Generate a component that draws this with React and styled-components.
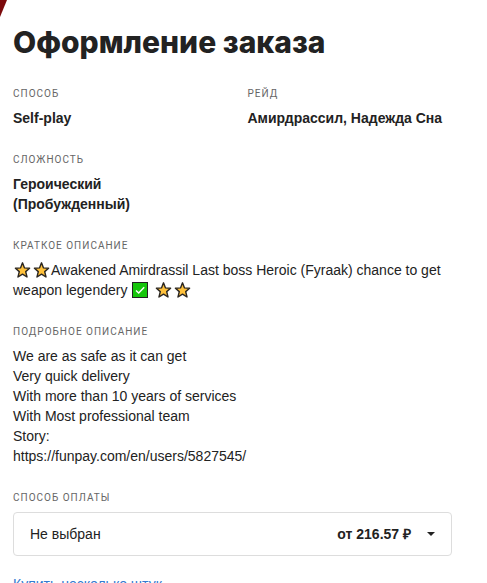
import styled, { createGlobalStyle } from "styled-components";

const GlobalStyle = createGlobalStyle`
  * {
    box-sizing: border-box;
  }
  body {
    margin: 0;
    background-color: white;
    color: #222;
    font-family: "Liberation Sans", Arial, sans-serif;
    font-size: 14px;
    line-height: 20px;
  }
`;
const Page = styled.div`
  position: relative;
  padding: 23px 35px 24px 13px;
`;
const Corner = styled.svg`
  position: absolute;
  top: 0;
  left: 0;
`;
const Title = styled.h1`
  margin: 0 0 26px;
  font-family: Inter, sans-serif;
  font-size: 30px;
  font-weight: 800;
  line-height: 38px;
`;
const Params = styled.div`
  display: grid;
  grid-template-columns: 1fr 1fr;
  column-gap: 30px;
`;
const Param = styled.div`
  margin-bottom: 25px;
  grid-column: ${(props) => (props.$wide ? "1 / -1" : "auto")};
`;
const Label = styled.h5`
  display: block;
  margin: 0 0 7px;
  color: #666;
  font-family: Roboto, sans-serif;
  font-size: 10px;
  font-weight: 400;
  line-height: 14px;
  letter-spacing: 1px;
  text-transform: uppercase;
`;
const Value = styled.div`
  font-weight: ${(props) => (props.$bold ? 700 : 400)};
  white-space: pre-line;
`;
const Emoji = styled.svg`
  width: 18px;
  height: 18px;
  margin-right: 1px;
  vertical-align: -4px;
`;
const Picker = styled.div`
  display: grid;
  grid-template-columns: 1fr auto auto;
  align-items: center;
  margin-bottom: 18px;
`;
const Select = styled.select`
  grid-area: 1 / 1 / 2 / 4;
  width: 100%;
  height: 44px;
  padding: 0 16px;
  appearance: none;
  border: 1px solid #ddd;
  border-radius: 4px;
  background-color: white;
  color: #222;
  font: inherit;
`;
const Price = styled.span`
  grid-area: 1 / 2;
  z-index: 1;
  margin-right: 16px;
  font-weight: 700;
  pointer-events: none;
`;
const Caret = styled.span`
  grid-area: 1 / 3;
  z-index: 1;
  margin-right: 17px;
  border-top: 4px solid #222;
  border-right: 4px solid transparent;
  border-left: 4px solid transparent;
  pointer-events: none;
`;
const Link = styled.a`
  color: #337ad0;
  text-decoration: none;
`;

function Star() {
  return (
    <Emoji viewBox="0 0 18 18" role="img" aria-label="Звезда">
      <path
        d="M9.5 1.8 11.5 6.9 16.6 7.2 12.7 10.6 14 16 9.5 13.1 5 16 6.3 10.6 2.4 7.2 7.5 6.9Z"
        fill="#ffc13b"
        stroke="#2b2620"
        strokeWidth="1.4"
        strokeLinejoin="round"
      />
    </Emoji>
  );
}

function Check() {
  return (
    <Emoji viewBox="0 0 18 18" role="img" aria-label="Галочка">
      <rect x="1.5" y="1.5" width="15" height="15" fill="#16c60c" stroke="#222" />
      <path d="M5 9.5 7.7 12 13.2 6.3" fill="none" stroke="white" strokeWidth="1.5" />
    </Emoji>
  );
}

const details = `We are as safe as it can get
Very quick delivery
With more than 10 years of services
With Most professional team
Story:
https://funpay.com/en/users/5827545/`;

function App() {
  return (
    <Page>
      <GlobalStyle />
      <Corner width="8" height="18" aria-hidden="true">
        <path d="M0 0H7L0 17Z" fill="#7c0a0c" />
      </Corner>
      <Title>Оформление заказа</Title>
      <Params>
        <Param>
          <Label>Способ</Label>
          <Value $bold>Self-play</Value>
        </Param>
        <Param>
          <Label>Рейд</Label>
          <Value $bold>Амирдрассил, Надежда Сна</Value>
        </Param>
        <Param>
          <Label>Сложность</Label>
          <Value $bold>Героический (Пробужденный)</Value>
        </Param>
        <Param $wide>
          <Label>Краткое описание</Label>
          <Value>
            <Star />
            <Star />
            Awakened Amirdrassil Last boss Heroic (Fyraak) chance to get weapon
            legendery <Check /> <Star />
            <Star />
          </Value>
        </Param>
        <Param $wide>
          <Label>Подробное описание</Label>
          <Value>{details}</Value>
        </Param>
      </Params>
      <Label as="label" htmlFor="method">
        Способ оплаты
      </Label>
      <Picker>
        <Select id="method">
          <option>Не выбран</option>
        </Select>
        <Price>от 216.57 ₽</Price>
        <Caret />
      </Picker>
      <Link href="#several">Купить несколько штук</Link>
    </Page>
  );
}

export default App;
